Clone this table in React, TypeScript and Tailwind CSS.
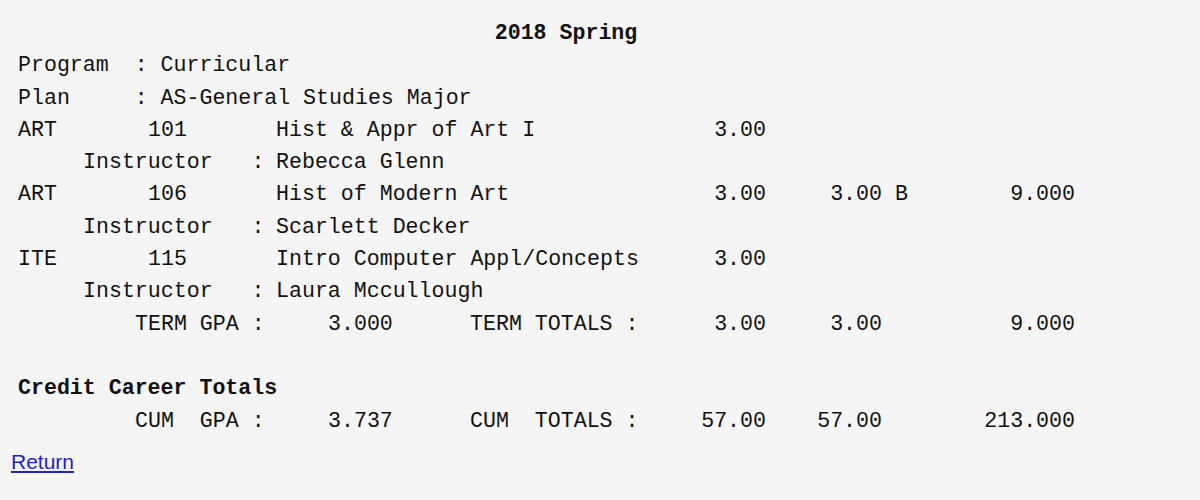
const courses = [
  { dept: 'ART', num: '101', title: 'Hist & Appr of Art I', att: '3.00', earned: '', grade: '', points: '', instructor: 'Rebecca Glenn' },
  { dept: 'ART', num: '106', title: 'Hist of Modern Art', att: '3.00', earned: '3.00', grade: 'B', points: '9.000', instructor: 'Scarlett Decker' },
  { dept: 'ITE', num: '115', title: 'Intro Computer Appl/Concepts', att: '3.00', earned: '', grade: '', points: '', instructor: 'Laura Mccullough' },
];

const TotalsRow = ({ gpaLabel, gpa, totLabel, att, earned, points }: { gpaLabel: string; gpa: string; totLabel: string; att: string; earned: string; points: string }) => (
  <div className="flex h-[32.3px] items-center whitespace-pre">
    <span className="w-[117px]" />
    <span className="w-[193px]">{gpaLabel}</span>
    <span className="w-[142px]">{gpa}</span>
    <span className="w-[196px]">{totLabel}</span>
    <span className="w-[100px] text-right">{att}</span>
    <span className="w-[116px] text-right">{earned}</span>
    <span className="w-[40px]" />
    <span className="w-[153px] text-right">{points}</span>
  </div>
);

export default function App() {
  return (
    <div className="min-h-[500px] w-[1200px] bg-[#f5f5f5] text-[#111]">
      <div className="pl-[18px] pt-[17px] font-['Liberation_Mono',monospace] text-[21.6px]">
        <div className="flex h-[32.3px] w-[1096px] items-center justify-center font-bold">2018 Spring</div>
        <div className="flex h-[32.3px] items-center whitespace-pre">Program  : Curricular</div>
        <div className="flex h-[32.3px] items-center whitespace-pre">Plan     : AS-General Studies Major</div>
        {courses.map((c) => (
          <div key={c.num}>
            <div className="flex h-[32.3px] items-center whitespace-pre">
              <span className="w-[130px]">{c.dept}</span>
              <span className="w-[128px]">{c.num}</span>
              <span className="w-[390px]">{c.title}</span>
              <span className="w-[100px] text-right">{c.att}</span>
              <span className="w-[116px] text-right">{c.earned}</span>
              <span className="w-[40px] pl-[13px]">{c.grade}</span>
              <span className="w-[153px] text-right">{c.points}</span>
            </div>
            <div className="flex h-[32.3px] items-center whitespace-pre">
              <span className="w-[258px] pl-[65px]">Instructor   :</span>
              <span>{c.instructor}</span>
            </div>
          </div>
        ))}
        <TotalsRow gpaLabel="TERM GPA :" gpa="3.000" totLabel="TERM TOTALS :" att="3.00" earned="3.00" points="9.000" />
        <div className="h-[32.3px]" />
        <div className="flex h-[32.3px] items-center font-bold">Credit Career Totals</div>
        <TotalsRow gpaLabel="CUM  GPA :" gpa="3.737" totLabel="CUM  TOTALS :" att="57.00" earned="57.00" points="213.000" />
      </div>
      <div className="pl-[11px] pt-[9px]">
        <a href="#" className="font-['Liberation_Sans',Arial,sans-serif] text-[21px] text-[#2323cc] underline">
          Return
        </a>
      </div>
    </div>
  );
}
